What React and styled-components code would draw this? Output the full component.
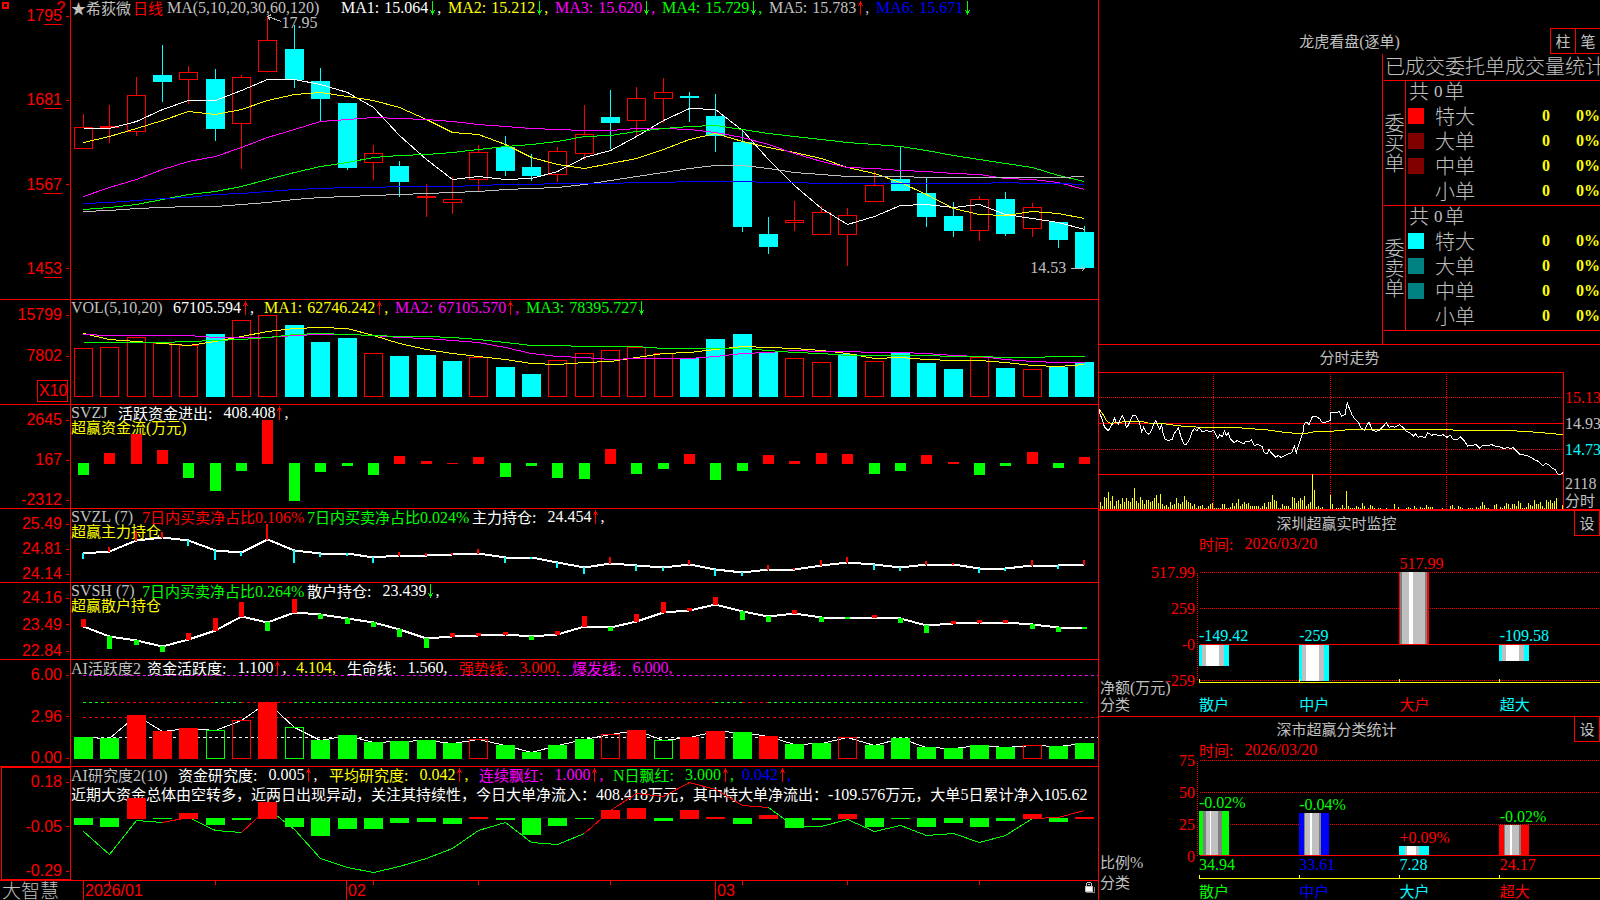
import React from "react";
import styled, { createGlobalStyle } from "styled-components";

const red = "#ff0000";
const cyan = "#00ffff";
const green = "#00ff00";
const yellow = "#ffff00";
const magenta = "#ff00ff";
const blue = "#0000ff";
const silver = "#c0c0c0";
const gray = "#808080";
const white = "#ffffff";

const barX = (i) => Math.round(12 + 26.35 * i);

/* ---------- data ---------- */

// [rising, high, body top, body bottom, low]
const candles = [
  [1, 114, 127, 148, 148], [1, 105, 126, 127, 143], [1, 77, 95, 131, 136],
  [0, 45, 75, 81, 102], [1, 66, 72, 79, 104], [0, 69, 79, 128, 141],
  [1, 75, 77, 123, 169], [1, 16, 40, 71, 71], [0, 25, 49, 79, 88],
  [0, 68, 81, 98, 121], [0, 103, 103, 167, 170], [1, 145, 153, 162, 180],
  [0, 161, 166, 181, 197], [1, 184, 196, 197, 217], [1, 177, 199, 202, 214],
  [1, 145, 152, 179, 191], [0, 136, 147, 170, 176], [0, 154, 167, 175, 181],
  [1, 147, 151, 174, 182], [1, 105, 134, 153, 160], [0, 90, 117, 122, 149],
  [1, 87, 98, 120, 136], [1, 78, 92, 98, 123], [0, 92, 96, 97, 122],
  [0, 94, 116, 135, 152], [0, 130, 142, 226, 232], [0, 217, 234, 246, 254],
  [1, 201, 220, 222, 231], [1, 206, 212, 234, 234], [1, 208, 215, 234, 266],
  [1, 171, 185, 201, 201], [0, 147, 179, 190, 190], [0, 178, 193, 216, 227],
  [0, 202, 216, 230, 237], [1, 196, 199, 230, 241], [0, 192, 199, 233, 236],
  [1, 203, 207, 228, 237], [0, 222, 222, 239, 248], [0, 226, 232, 267, 267],
];

const maLines = [
  [white, [128, 128, 121, 109, 100, 100, 90, 79, 79, 84, 92, 107, 135, 159, 179, 176, 179, 178, 171, 157, 150, 136, 120, 108, 109, 130, 159, 185, 208, 224, 216, 205, 204, 207, 204, 214, 218, 222, 229]],
  [yellow, [142, 136, 128, 120, 111, 114, 109, 100, 94, 92, 96, 100, 107, 119, 132, 134, 144, 157, 164, 168, 163, 158, 149, 139, 133, 141, 147, 152, 158, 167, 173, 182, 194, 208, 214, 215, 211, 213, 218]],
  [magenta, [196, 187, 179, 169, 161, 156, 147, 137, 129, 121, 119, 117, 118, 119, 121, 124, 126, 128, 129, 130, 130, 128, 128, 129, 132, 137, 144, 153, 161, 167, 168, 170, 171, 173, 174, 178, 179, 182, 189]],
  [green, [209, 207, 204, 199, 194, 191, 186, 179, 172, 166, 162, 157, 155, 154, 152, 149, 146, 144, 141, 136, 135, 131, 128, 126, 125, 129, 133, 136, 139, 142, 144, 146, 150, 155, 159, 163, 167, 175, 181]],
  [silver, [211, 210, 208, 207, 206, 206, 204, 202, 199, 197, 196, 195, 194, 193, 192, 191, 189, 188, 187, 184, 180, 176, 172, 168, 165, 165, 168, 172, 174, 176, 176, 176, 177, 177, 177, 177, 177, 177, 176]],
  [blue, [203, 202, 200, 198, 197, 194, 193, 191, 189, 188, 187, 187, 186, 186, 186, 185, 184, 184, 183, 183, 183, 182, 182, 181, 181, 181, 182, 182, 183, 183, 183, 183, 183, 183, 183, 182, 183, 183, 184]],
];

const volumeTops = [48, 47, 37, 43, 45, 34, 20, 15, 25, 42, 38, 53, 56, 55, 61, 57, 67, 74, 60, 53, 50, 47, 53, 58, 39, 34, 52, 58, 62, 54, 61, 53, 63, 69, 57, 68, 69, 67, 62];
const volumeFall = [5, 8, 9, 10, 12, 13, 14, 16, 17, 23, 24, 25, 26, 29, 31, 32, 33, 35, 37, 38];
const volumeLines = [
  [yellow, [33, 39, 41, 43, 45, 41, 36, 31, 28, 27, 28, 35, 43, 49, 53, 56, 59, 63, 64, 62, 61, 57, 53, 52, 49, 46, 47, 48, 50, 53, 58, 57, 59, 60, 60, 62, 65, 66, 64]],
  [magenta, [34, 35, 35, 35, 35, 37, 37, 37, 35, 34, 34, 35, 37, 38, 40, 42, 47, 53, 56, 57, 59, 58, 58, 58, 56, 53, 52, 50, 51, 51, 52, 52, 53, 55, 56, 59, 61, 62, 62]],
  [green, [42, 42, 42, 42, 41, 40, 39, 37, 34, 33, 34, 35, 36, 36, 37, 39, 42, 45, 45, 46, 46, 46, 48, 48, 48, 48, 50, 52, 53, 55, 55, 55, 55, 56, 56, 57, 57, 56, 56]],
];

const fundFlow = [-12, 11, 30, 14, -15, -28, -8, 44, -38, -9, -3, -12, 8, 3, 1, 7, -14, -3, -15, -16, 15, -11, -6, 10, -17, -8, 9, 3, 11, 10, -11, -8, 9, 2, -12, -3, 12, -5, 7];

const mainLine = [44, 42, 31, 28, 31, 41, 43, 30, 41, 44, 44, 48, 46, 46, 45, 44, 48, 48, 53, 58, 54, 56, 58, 55, 60, 63, 60, 60, 56, 53, 55, 58, 55, 55, 59, 59, 56, 56, 55];
const mainTicks = [-5, 4, 9, 5, -5, -9, -3, 15, -12, -3, -2, -5, 3, 2, 1, 4, -5, -1, -5, -6, 6, -5, -3, 4, -6, -3, 4, 1, 5, 5, -5, -3, 3, 1, -4, -2, 5, -3, 4];

const retailLine = [43, 53, 57, 63, 56, 47, 33, 39, 29, 31, 35, 39, 46, 55, 53, 52, 51, 53, 51, 43, 44, 38, 29, 27, 21, 28, 33, 30, 34, 34, 34, 35, 42, 40, 39, 39, 41, 44, 44];
const retailTicks = [7, -12, -4, -5, 6, 12, 14, -8, 13, -4, -5, -4, -7, -9, 3, 2, 2, -3, 3, 10, -3, 7, 10, 2, 7, -8, -5, 3, -4, -1, 2, -4, -7, 2, 2, 2, -4, -4, -1];

// g / r filled, G / R hollow
const activeKinds = "ggrrrGRrGggggggRggggRrGrrgrggRggggggRgg";
const activeTops = [77, 78, 55, 71, 68, 70, 60, 42, 67, 80, 75, 82, 81, 80, 83, 79, 85, 92, 85, 79, 74, 70, 80, 77, 71, 72, 76, 84, 83, 77, 85, 78, 87, 88, 85, 87, 85, 86, 83];
const activeBands = [[0, 1, green], [1, 5, red], [5, 6, green], [6, 8, red], [8, 20, green], [20, 24, red], [24, 25, green], [25, 26, red], [26, 38, green]];

const researchBars = [-7, -9, 21, -1, 6, -7, -2, 17, -9, -18, -11, -11, -5, -4, -6, 2, -2, -17, -8, -1, 9, 11, -3, 9, 2, -6, 4, -10, -2, 5, -9, -1, -9, -5, -9, -3, 5, -4, 2];
const researchLine = [64, 87, 53, 55, 50, 63, 65, 41, 62, 91, 100, 105, 99, 91, 81, 63, 55, 75, 77, 66, 43, 26, 29, 15, 22, 38, 40, 59, 59, 52, 64, 58, 68, 66, 75, 68, 51, 50, 43];
const researchRuns = [[0, 3, green], [3, 4, red], [4, 6, green], [6, 7, red], [7, 19, green], [19, 26, red], [26, 36, green], [36, 38, red]];

const pricePoints =
  "12,208 16,225 22,238 28,260 40,272 46,262 52,252 58,234 64,247 70,252 76,238 82,226 88,238 94,262 100,256 106,240 114,226 122,226 128,238 134,250 140,275 146,262 152,275 162,283 170,270 176,252 182,242 188,256 194,268 200,254 204,280 210,297 220,302 232,298 238,280 250,264 258,290 266,312 274,313 284,298 290,278 298,266 306,272 312,262 322,276 332,272 344,274 356,272 362,282 368,294 374,284 382,290 388,272 394,286 400,278 406,296 418,308 426,302 436,306 446,312 452,304 462,306 470,300 478,316 490,314 502,320 508,338 516,342 522,328 530,340 542,352 550,346 558,352 568,348 578,342 590,338 598,318 604,338 610,318 618,294 624,276 628,250 636,246 642,254 652,230 664,230 674,236 682,248 694,246 706,242 708,216 724,218 732,214 740,228 750,224 757,188 764,208 772,226 782,240 790,246 798,264 808,270 814,258 822,246 832,270 842,274 852,272 860,264 874,248 882,262 890,258 898,262 914,254 926,264 934,274 946,280 956,288 962,282 970,292 980,288 990,294 998,278 1010,286 1020,282 1034,288 1044,284 1056,292 1066,286 1074,298 1086,300 1096,290 1106,300 1118,318 1130,316 1144,314 1154,324 1164,316 1178,316 1190,314 1200,318 1212,320 1228,326 1238,322 1246,326 1254,322 1262,330 1276,344 1296,346 1308,352 1320,360 1330,364 1344,378 1352,370 1362,374 1370,384 1380,388 1388,402 1396,404 1404,398";
const averagePoints =
  "12,208 22,220 36,244 48,250 80,246 120,244 140,244 160,249 212,252 240,256 268,259 320,262 430,263 466,266 520,270 560,276 600,280 630,281 654,276 708,274 760,269 860,268 1066,268 1080,271 1230,271 1300,275 1350,279 1404,284";
const minuteVolumes = [
  20, 10, 36, 32, 51, 23, 39, 10, 23, 26, 15, 32, 20, 32, 23, 20, 32, 63, 25, 19,
  36, 26, 15, 28, 26, 20, 23, 32, 42, 17, 45, 15, 10, 12, 6, 20, 12, 16, 33, 17,
  16, 20, 39, 26, 20, 18, 8, 15, 4, 8, 8, 12, 3, 4, 10, 14, 18, 3, 4, 3,
  3, 16, 14, 4, 3, 6, 17, 10, 18, 30, 10, 14, 20, 14, 18, 10, 8, 8, 10, 10,
  4, 10, 18, 7, 22, 20, 42, 28, 24, 3, 3, 15, 8, 8, 8, 3, 36, 32, 18, 24,
  34, 26, 38, 8, 16, 22, 105, 57, 5, 10, 3, 6, 0, 0, 0, 42, 14, 0, 3, 3,
  3, 12, 4, 54, 10, 3, 3, 4, 10, 6, 4, 19, 10, 0, 4, 12, 8, 3, 0, 2,
  2, 0, 0, 2, 0, 0, 0, 15, 0, 5, 0, 0, 0, 3, 6, 3, 0, 8, 3, 0,
  6, 3, 3, 12, 6, 6, 6, 0, 0, 0, 0, 3, 0, 0, 0, 8, 12, 4, 0, 8,
  6, 2, 0, 0, 2, 4, 3, 0, 6, 4, 10, 20, 12, 3, 4, 0, 0, 12, 16, 0,
  6, 4, 8, 18, 14, 3, 14, 16, 10, 24, 18, 4, 3, 6, 18, 12, 10, 26, 14, 16,
  20, 10, 4, 26, 20, 27, 18, 24, 33, 0, 0, 12,
];

/* ---------- shared ---------- */

const GlobalStyle = createGlobalStyle`
  * {
    box-sizing: border-box;
  }
  body {
    margin: 0;
    background: #000;
    color: ${silver};
    font-family: "Liberation Serif", "Noto Sans CJK SC", serif;
    font-size: 16px;
    line-height: 16px;
  }
`;

const Zh = styled.span`
  font-family: "Noto Sans CJK SC", sans-serif;
  font-size: 15px;
  font-weight: 400;
`;

const Mixed = ({ children }) =>
  children
    .split(/([\u3000-\u9fff\uff00-\uffef]+)/)
    .filter(Boolean)
    .map((part, i) => (/[\u3000-\u9fff\uff00-\uffef]/.test(part) ? <Zh key={i}>{part}</Zh> : part));

const Svg = styled.svg`
  grid-area: 1 / 1;
  display: block;
  width: 100%;
  height: 100%;
  min-height: 0;
  shape-rendering: crispEdges;
  fill: none;
  polyline,
  path,
  line {
    vector-effect: non-scaling-stroke;
  }
`;

const ArrowIcon = styled.svg`
  flex: none;
  width: 5px;
  height: 14px;
  margin: 0 2px;
  shape-rendering: crispEdges;
  transform: ${(p) => (p.$up ? "none" : "rotate(180deg)")};
`;

const Arrow = ({ up }) => (
  <ArrowIcon $up={up} viewBox="0 0 5 14" fill={up ? red : green} aria-hidden="true">
    <path d="M2 0h1v14h-1zM1 2h3v2h-3zM0 4h1v1h-1zM4 4h1v1h-1z" />
  </ArrowIcon>
);

/* ---------- left side ---------- */

const Page = styled.main`
  display: grid;
  grid-template-columns: minmax(0, 1099fr) minmax(0, 501fr);
  grid-template-rows: minmax(0, 1fr);
  height: 100vh;
  min-height: 720px;
  overflow: hidden;
`;

const Charts = styled.section`
  display: grid;
  grid-template-rows:
    minmax(0, 300fr) minmax(0, 105fr) minmax(0, 104fr) minmax(0, 74fr)
    minmax(0, 77fr) minmax(0, 107fr) minmax(0, 114fr) minmax(0, 19fr);
  border-right: 1px solid ${red};
  min-width: 0;
`;

const Panel = styled.section`
  display: grid;
  grid-template-columns: 71px minmax(0, 1fr);
  grid-template-rows: minmax(0, 1fr);
  border-bottom: 1px solid ${red};
`;

const Axis = styled.div`
  position: relative;
  display: flex;
  flex-direction: column;
  justify-content: space-between;
  padding: ${(p) => p.$top || 7}px 0 ${(p) => p.$bottom || 0}px;
  border: 0 solid ${red};
  border-width: ${(p) => (p.$boxed ? "1px" : "0 1px 0 0")};
  margin-left: ${(p) => (p.$boxed ? 1 : 0)}px;
  color: ${red};
  font-family: "Liberation Sans", sans-serif;
`;

const Tick = styled.span`
  display: flex;
  align-items: center;
  justify-content: flex-end;
  gap: 4px;
  height: 16px;
  padding-right: 1px;
  white-space: nowrap;
  &::after {
    content: "";
    width: 3px;
    height: 1px;
    background: ${red};
  }
  u {
    height: 18px;
    padding-top: 1px;
    margin-left: -4px;
    text-decoration: none;
    border-bottom: 1px solid ${red};
  }
`;

const Multiplier = styled.span`
  align-self: flex-end;
  width: 31px;
  margin-right: 2px;
  padding: 2px 0 2px 1px;
  border: 1px solid ${red};
`;

const VolumeTop = styled.div`
  display: flex;
  flex-direction: column;
  gap: 25px;
`;

const Plot = styled.div`
  position: relative;
  display: grid;
  grid-template-columns: minmax(0, 1fr);
  grid-template-rows: minmax(0, 1fr);
  overflow: hidden;
`;

const Readouts = styled.header`
  grid-area: 1 / 1;
  line-height: 15px;
  white-space: nowrap;
`;

const Readout = styled.div`
  display: flex;
  height: 15px;
`;

const Item = styled.span`
  display: flex;
  flex: none;
  align-items: center;
  width: ${(p) => (p.$w ? `${p.$w}px` : "auto")};
  color: ${(p) => p.$color || silver};
`;

const Label = styled.span`
  margin-right: ${(p) => (p.$wide ? 11 : 5)}px;
`;

const Note = styled.p`
  margin: 0;
  color: ${(p) => p.$color};
  line-height: ${(p) => p.$line || 14}px;
`;

const PeriodLink = styled.a`
  margin-left: 2px;
  color: ${red};
  text-decoration: none;
`;

const Field = ({ w, color, label, value, up, down, comma = true }) => (
  <Item $w={w} $color={color}>
    {label && (
      <Label $wide={/[\u4e00-\u9fff]/.test(label)}>
        <Mixed>{label + ":"}</Mixed>
      </Label>
    )}
    <span>
      <Mixed>{value}</Mixed>
    </span>
    {(up || down) && <Arrow up={up} />}
    {comma && ","}
  </Item>
);

const Series = ({ values, color, width = 1, from = 0, to = values.length - 1 }) => (
  <polyline
    transform="translate(.5 .5)"
    stroke={color}
    strokeWidth={width}
    points={values
      .map((y, i) => `${barX(i)},${y}`)
      .slice(from, to + 1)
      .join(" ")}
  />
);

const Bar = ({ i, top, bottom, color, hollow, w = 19 }) =>
  hollow ? (
    <rect x={barX(i) - (w - 1) / 2 + 0.5} y={top + 0.5} width={w - 1} height={bottom - top - 1} stroke={color} />
  ) : (
    <rect x={barX(i) - (w - 1) / 2} y={top} width={w} height={bottom - top} fill={color} />
  );

const CornerMark = styled.svg`
  position: absolute;
  left: 2px;
  top: 2px;
  width: 8px;
  height: 8px;
  shape-rendering: crispEdges;
`;

const Help = styled.button`
  position: absolute;
  right: 4px;
  top: 0;
  padding: 0;
  border: 0;
  background: none;
  color: #c80000;
  font: bold 16px/16px "Liberation Sans", sans-serif;
`;

const PriceTag = styled.span`
  position: absolute;
  left: ${(p) => p.$x}%;
  top: ${(p) => p.$y}%;
`;

const Kline = () => (
  <Panel>
    <Axis $top={8} $bottom={22}>
      <CornerMark viewBox="0 0 8 8" fill="none" stroke={red} strokeWidth="2" aria-hidden="true">
        <path d="M1 1h5v5h-5z" />
      </CornerMark>
      {["17 95", "16 81", "15 67", "14 53"].map((t) => (
        <Tick key={t}>
          {t.split(" ")[0]}
          <u>{t.split(" ")[1]}</u>
        </Tick>
      ))}
      <Help aria-label="帮助">?</Help>
    </Axis>
    <Plot>
      <Readouts>
        <Readout>
          <Item $w={96}>
            <Zh>★希荻微</Zh>
            <PeriodLink href="#day">
              <Zh>日线</Zh>
            </PeriodLink>
          </Item>
          <Item $w={174}>MA(5,10,20,30,60,120)</Item>
          <Field w={107} color={white} label="MA1" value="15.064" down />
          <Field w={107} color={yellow} label="MA2" value="15.212" down />
          <Field w={107} color={magenta} label="MA3" value="15.620" down />
          <Field w={107} color={green} label="MA4" value="15.729" down />
          <Field w={107} color={silver} label="MA5" value="15.783" up />
          <Field color={blue} label="MA6" value="15.671" down comma={false} />
        </Readout>
      </Readouts>
      <Svg viewBox="0 0 1027 299" preserveAspectRatio="none">
        {candles.map(([up, high, top, bottom, low], i) => (
          <g key={i}>
            <rect x={barX(i)} y={high} width="1" height={top - high} fill={up ? red : cyan} />
            <rect x={barX(i)} y={bottom} width="1" height={low - bottom} fill={up ? red : cyan} />
            <Bar i={i} top={top} bottom={bottom + 1} color={up ? red : cyan} hollow={up && bottom - top > 1} />
          </g>
        ))}
        {maLines.map(([color, values]) => (
          <Series key={color} color={color} values={values} />
        ))}
        <g stroke={silver} transform="translate(.5 .5)">
          <path d="M210 21L196 16M200 14L196 16L199 20" />
          <path d="M999 268H1013M1010 265L1013 268L1010 271" />
        </g>
      </Svg>
      <PriceTag $x={20.5} $y={5}>17.95</PriceTag>
      <PriceTag $x={93.4} $y={87}>14.53</PriceTag>
    </Plot>
  </Panel>
);

const Volume = () => (
  <Panel>
    <Axis $bottom={2}>
      <VolumeTop>
        <Tick>15799</Tick>
        <Tick>7802</Tick>
      </VolumeTop>
      <Multiplier>X10</Multiplier>
    </Axis>
    <Plot>
      <Readouts>
        <Readout>
          <Item $w={102}>VOL(5,10,20)</Item>
          <Field w={91} color={white} value="67105.594" up />
          <Field w={131} color={yellow} label="MA1" value="62746.242" up />
          <Field w={131} color={magenta} label="MA2" value="67105.570" up />
          <Field color={green} label="MA3" value="78395.727" down comma={false} />
        </Readout>
      </Readouts>
      <Svg viewBox="0 0 1027 104" preserveAspectRatio="none">
        {volumeTops.map((top, i) => {
          const fall = volumeFall.includes(i);
          return <Bar key={i} i={i} top={top} bottom={97} color={fall ? cyan : red} hollow={!fall} />;
        })}
        {volumeLines.map(([color, values]) => (
          <Series key={color} color={color} values={values} />
        ))}
      </Svg>
    </Plot>
  </Panel>
);

const FundFlow = () => (
  <Panel>
    <Axis>
      <Tick>2645</Tick>
      <Tick>167</Tick>
      <Tick>-2312</Tick>
    </Axis>
    <Plot>
      <Readouts>
        <Readout>
          <Item $w={47}>SVZJ</Item>
          <Field color={white} label="活跃资金进出" value="408.408" up />
        </Readout>
        <Note $color={yellow}>
          <Mixed>超赢资金流(万元)</Mixed>
        </Note>
      </Readouts>
      <Svg viewBox="0 0 1027 103" preserveAspectRatio="none">
        {fundFlow.map((h, i) => (
          <Bar key={i} i={i} w={11} top={h > 0 ? 59 - h : 58} bottom={h > 0 ? 59 : 58 - h} color={h > 0 ? red : green} />
        ))}
      </Svg>
    </Plot>
  </Panel>
);

const Holding = ({ ticks, name, fields, note, height, line, offsets, down, tickWidth }) => (
  <Panel>
    <Axis>
      {ticks.map((t) => (
        <Tick key={t}>{t}</Tick>
      ))}
    </Axis>
    <Plot>
      <Readouts>
        <Readout>
          <Item $w={71}>{name}</Item>
          {fields}
        </Readout>
        <Note $color={yellow}>
          <Mixed>{note}</Mixed>
        </Note>
      </Readouts>
      <Svg viewBox={`0 0 1027 ${height}`} preserveAspectRatio="none">
        <Series values={line} color={white} width={2} />
        {offsets.map((h, i) => (
          <rect
            key={i}
            x={barX(i) - Math.floor(tickWidth / 2)}
            y={h > 0 ? line[i] - h : line[i]}
            width={tickWidth}
            height={Math.abs(h) + 1}
            fill={h > 0 ? red : down}
          />
        ))}
      </Svg>
    </Plot>
  </Panel>
);

const Activity = () => (
  <Panel>
    <Axis>
      <Tick>6.00</Tick>
      <Tick>2.96</Tick>
      <Tick>0.00</Tick>
    </Axis>
    <Plot>
      <Readouts>
        <Readout>
          <Item $w={76}>
            <span>
              <Mixed>AI活跃度2</Mixed>
            </span>
          </Item>
          <Field w={149} color={white} label="资金活跃度" value="1.100" up />
          <Field w={51} color={yellow} value="4.104" />
          <Field w={112} color={white} label="生命线" value="1.560" />
          <Field w={113} color={red} label="强势线" value="3.000" />
          <Field color={magenta} label="爆发线" value="6.000" />
        </Readout>
      </Readouts>
      <Svg viewBox="0 0 1027 106" preserveAspectRatio="none">
        <g strokeDasharray="3 3" transform="translate(0 .5)">
          <line x1="12" x2="1027" y1="15" y2="15" stroke={magenta} />
          <line x1="12" x2="1027" y1="57" y2="57" stroke={red} />
          <line x1="12" x2="1027" y1="77" y2="77" stroke={white} />
          {activeBands.map(([from, to, color]) => (
            <line key={from} x1={barX(from)} x2={barX(to)} y1="42" y2="42" stroke={color} />
          ))}
        </g>
        <Series values={activeTops} color={white} />
        {activeTops.map((top, i) => {
          const kind = activeKinds[i];
          return (
            <Bar
              key={i}
              i={i}
              top={top}
              bottom={99}
              color={kind.toLowerCase() === "g" ? green : red}
              hollow={kind === kind.toUpperCase()}
            />
          );
        })}
      </Svg>
    </Plot>
  </Panel>
);

const Research = () => (
  <Panel>
    <Axis $boxed $top={6}>
      <Tick>0.18</Tick>
      <Tick>-0.05</Tick>
      <Tick>-0.29</Tick>
    </Axis>
    <Plot>
      <Readouts>
        <Readout>
          <Item $w={107}>
            <span>
              <Mixed>AI研究度2(10)</Mixed>
            </span>
          </Item>
          <Field w={151} color={white} label="资金研究度" value="0.005" up />
          <Field w={150} color={yellow} label="平均研究度" value="0.042" up />
          <Field w={134} color={magenta} label="连续飘红" value="1.000" up />
          <Field w={129} color={green} label="N日飘红" value="3.000" up />
          <Field color={blue} value="0.042" up />
        </Readout>
        <Note $color={white} $line={23}>
          <Mixed>
            近期大资金总体由空转多，近两日出现异动，关注其持续性，今日大单净流入：408.418万元，其中特大单净流出：-109.576万元，大单5日累计净入105.62
          </Mixed>
        </Note>
      </Readouts>
      <Svg viewBox="0 0 1027 113" preserveAspectRatio="none">
        {researchRuns.map(([from, to, color]) => (
          <Series key={from} values={researchLine} color={color} from={from} to={to} />
        ))}
        {researchBars.map((h, i) => (
          <Bar key={i} i={i} top={h > 0 ? 52 - h : 51} bottom={h > 0 ? 52 : 51 - h} color={h > 0 ? red : green} />
        ))}
      </Svg>
    </Plot>
  </Panel>
);

const Footer = styled.footer`
  display: grid;
  grid-template-columns: 71px minmax(0, 1fr);
`;

const Brand = styled.span`
  padding-left: 2px;
  font-family: "Noto Sans CJK SC", sans-serif;
  font-size: 19px;
  font-weight: 300;
  line-height: 18px;
`;

const Timeline = styled.div`
  position: relative;
  display: grid;
  grid-template-columns: minmax(0, 12fr) minmax(0, 263fr) minmax(0, 369fr) minmax(0, 383fr);
`;

const Month = styled.span`
  padding-left: 1px;
  border-left: 1px solid ${red};
  color: ${red};
  font-family: "Liberation Sans", sans-serif;
  line-height: 19px;
`;

const WeekTicks = styled.svg`
  position: absolute;
  inset: 0 0 auto;
  width: 100%;
  height: 4px;
  shape-rendering: crispEdges;
`;

const Lock = styled.svg`
  position: absolute;
  right: 3px;
  top: 1px;
  width: 10px;
  height: 12px;
  shape-rendering: crispEdges;
`;

const TimeAxis = () => (
  <Footer>
    <Brand>大智慧</Brand>
    <Timeline>
      <span />
      <Month>2026/01</Month>
      <Month>02</Month>
      <Month>03</Month>
      <WeekTicks viewBox="0 0 1027 4" preserveAspectRatio="none" fill={red}>
        {[1, 5, 11, 15, 20, 25, 29, 34].map((i) => (
          <rect key={i} x={barX(i)} y="0" width="1" height="4" />
        ))}
      </WeekTicks>
      <Lock viewBox="0 0 10 12" aria-hidden="true">
        <path d="M2 0h4v1h-4zM1 1h1v3h-1zM6 1h1v3h-1zM3 2h2v1h-2z" fill={silver} />
        <path d="M0 4h8v6h-8z" fill={silver} />
        <path d="M1 5h6v4h-6z" fill={white} />
        <path d="M9 5h1v6h-9v-1h8z" fill={gray} />
      </Lock>
    </Timeline>
  </Footer>
);

/* ---------- right side ---------- */

const Side = styled.aside`
  display: grid;
  grid-template-rows: minmax(0, 345fr) minmax(0, 166fr) minmax(0, 206fr) minmax(0, 183fr);
  min-width: 0;
`;

const Orders = styled.section`
  display: flex;
  flex-direction: column;
  padding-top: 28px;
  border-bottom: 1px solid ${red};
  overflow: hidden;
`;

const OrdersHead = styled.header`
  display: grid;
  grid-template-columns: 1fr auto 1fr;
  align-items: center;
  height: 26px;
`;

const Title = styled.h2`
  margin: 0;
  font-size: 16px;
  font-weight: 400;
  line-height: 24px;
  text-align: center;
`;

const Buttons = styled.div`
  grid-column: 3;
  display: flex;
  justify-self: end;
`;

const ToolButton = styled.button`
  width: 25px;
  height: 26px;
  padding: 0;
  border: 1px solid ${red};
  border-right-width: ${(p) => (p.$closed ? 1 : 0)}px;
  border-top-width: ${(p) => (p.$closed ? 0 : 1)}px;
  background: #000;
  color: ${silver};
  font: 400 15px/22px "Noto Sans CJK SC", sans-serif;
`;

const OrderBox = styled.div`
  flex: 1;
  align-self: flex-end;
  width: 218px;
  padding-left: 1px;
  border-left: 1px solid ${red};
  font: 300 20px/24px "Noto Sans CJK SC", sans-serif;
  white-space: nowrap;
`;

const OrderTitle = styled.h3`
  height: 26px;
  margin: 0;
  padding-left: 1px;
  font-size: 20px;
  font-weight: 300;
  line-height: 23px;
`;

const OrderTable = styled.table`
  width: 100%;
  table-layout: fixed;
  border-spacing: 0;
  border-bottom: 1px solid ${red};
  line-height: 20px;

  tbody tr:first-child > * {
    border-top: 1px solid ${red};
  }
  th,
  td {
    height: 25px;
    padding: 0 0 4px;
    font-weight: 300;
    text-align: left;
    vertical-align: middle;
  }
  tbody th[rowspan] {
    padding: 0;
    border-right: 1px solid ${red};
    text-align: center;
    white-space: normal;
  }
`;

const SideWord = styled.span`
  display: block;
  width: 20px;
  margin: 0 auto;
  word-break: break-all;
`;

const Swatch = styled.i`
  display: block;
  width: 16px;
  height: 16px;
  margin-left: 2px;
  background: ${(p) => p.$color};
`;

const Num = styled.td`
  && {
    color: ${yellow};
    font-family: "Liberation Serif", serif;
    font-size: 16px;
    font-weight: 700;
    text-align: right;
  }
`;

const Total = styled.span`
  display: flex;
  height: 20px;
  padding-left: 3px;
  b {
    margin: 0 2px 0 5px;
    font: 17px/22px "Liberation Serif", serif;
  }
`;

const sides = [
  ["委买单", [["特大", red], ["大单", "#800000"], ["中单", "#800000"], ["小单", "transparent"]]],
  ["委卖单", [["特大", cyan], ["大单", "#008080"], ["中单", "#008080"], ["小单", "transparent"]]],
];

const OrderStats = () => (
  <Orders>
    <OrdersHead>
      <span />
      <Title>
        <Mixed>龙虎看盘(逐单)</Mixed>
      </Title>
      <Buttons>
        <ToolButton>柱</ToolButton>
        <ToolButton>笔</ToolButton>
      </Buttons>
    </OrdersHead>
    <OrderBox>
      <OrderTitle id="order-title">已成交委托单成交量统计</OrderTitle>
      <OrderTable aria-labelledby="order-title">
        <colgroup>
          <col width="22" />
          <col width="29" />
          <col width="70" />
          <col width="45" />
          <col width="50" />
        </colgroup>
        {sides.map(([side, rows]) => (
          <tbody key={side}>
            <tr>
              <th rowSpan={5} scope="rowgroup">
                <SideWord>{side}</SideWord>
              </th>
              <td colSpan={4}>
                <Total>
                  共<b>0</b>单
                </Total>
              </td>
            </tr>
            {rows.map(([name, color]) => (
              <tr key={name}>
                <td>
                  <Swatch $color={color} />
                </td>
                <th scope="row">{name}</th>
                <Num>0</Num>
                <Num>0%</Num>
              </tr>
            ))}
          </tbody>
        ))}
      </OrderTable>
    </OrderBox>
  </Orders>
);

const Intraday = styled.section`
  display: grid;
  grid-template-columns: minmax(0, 465fr) minmax(0, 36fr);
  grid-template-rows: 27px minmax(0, 1fr);
  border-bottom: 2px solid ${red};
  ${Title} {
    grid-column: 1 / 3;
  }
  ${Svg} {
    grid-area: 2 / 1;
  }
`;

const PriceScale = styled.div`
  grid-area: 2 / 2;
  display: flex;
  flex-direction: column;
  gap: 10px;
  padding: 18px 0 0 1px;
  overflow: hidden;
  white-space: nowrap;
`;

const Tone = styled.span`
  color: ${(p) => p.$color};
`;

const Bottom = styled.span`
  margin-top: 8px;
  line-height: 16px;
`;

const IntradayChart = () => (
  <Intraday>
    <Title>
      <Zh>分时走势</Zh>
    </Title>
    <Svg viewBox="12 96 1395 411" preserveAspectRatio="none">
      <g stroke={red}>
        <path d="M12 97.5H1405.5V507M12 250.5H1405M12 403.5H1405" />
        <path strokeDasharray="1 1" d="M12 172.5H1405M12 328.5H1405M355.5 97V507M706.5 97V507M1054.5 97V507" />
      </g>
      {minuteVolumes.map((h, i) => (
        <rect key={i} x={15 + i * 6} y={507 - h} width="3" height={h} fill={yellow} />
      ))}
      <polyline points={averagePoints} stroke={yellow} />
      <polyline points={pricePoints} stroke={white} />
    </Svg>
    <PriceScale>
      <Tone $color={red}>15.13</Tone>
      <Tone $color={silver}>14.93</Tone>
      <Tone $color={cyan}>14.73</Tone>
      <Bottom>
        2118
        <br />
        <Zh>分时</Zh>
      </Bottom>
    </PriceScale>
  </Intraday>
);

const BarPanel = styled.section`
  display: grid;
  grid-template-columns: 100px minmax(0, 1fr);
  grid-template-rows: 25px 16px minmax(0, 1fr) 16px;
  padding-bottom: ${(p) => (p.$last ? 0 : 3)}px;
  border-bottom: ${(p) => (p.$last ? 0 : 1)}px solid ${red};
`;

const BarHead = styled.header`
  grid-column: 1 / 3;
  display: grid;
  grid-template-columns: minmax(0, 1fr) 26px;
  ${ToolButton} {
    width: 26px;
    height: 25px;
  }
`;

const DateLine = styled.time`
  grid-area: 2 / 2;
  display: flex;
  color: ${red};
`;

const Scale = styled.div`
  grid-area: 2 / 1 / 5 / 2;
  display: flex;
  flex-direction: column;
  gap: ${(p) => p.$gap}px;
  padding: ${(p) => p.$top}px 4px 0 0;
  color: ${red};
  text-align: right;
`;

const Corner = styled.div`
  grid-area: 2 / 1 / 5 / 2;
  align-self: end;
  padding: 0 0 ${(p) => p.$bottom}px 1px;
  line-height: ${(p) => p.$line}px;
`;

const BarPlot = styled.div`
  grid-area: 3 / 2;
  position: relative;
  display: grid;
  grid-template-rows: minmax(0, 1fr);
`;

const BarLabel = styled.span`
  position: absolute;
  line-height: 16px;
  white-space: nowrap;
`;

const Categories = styled.div`
  grid-area: 4 / 2;
  display: grid;
  grid-template-columns: repeat(4, minmax(0, 1fr));
  line-height: 14px;
`;

const Tube = ({ x, top, bottom, stripes }) => {
  let left = x;
  return stripes.map(([w, color], i) => {
    const rect = <rect key={i} x={left} y={top} width={w} height={bottom - top} fill={color} />;
    left += w;
    return rect;
  });
};

const CategoryChart = ({ title, scale, scaleTop, scaleGap, corner, cornerLine, cornerBottom, height, grid, zero, base, bars, last }) => (
  <BarPanel $last={last}>
    <BarHead>
      <Title>
        <Zh>{title}</Zh>
      </Title>
      <ToolButton $closed>设</ToolButton>
    </BarHead>
    <DateLine dateTime="2026-03-20">
      <Label $wide>
        <Mixed>时间:</Mixed>
      </Label>
      2026/03/20
    </DateLine>
    <Scale $top={scaleTop} $gap={scaleGap}>
      {scale.map((s) => (
        <span key={s}>{s}</span>
      ))}
    </Scale>
    <Corner $line={cornerLine} $bottom={cornerBottom}>
      <Mixed>{corner}</Mixed>
      <br />
      <Zh>分类</Zh>
    </Corner>
    <BarPlot>
      <Svg viewBox={`0 0 401 ${height}`} preserveAspectRatio="none" overflow="visible">
        <g transform="translate(.5 .5)" stroke={red} strokeDasharray="1 1">
          {grid.map((y) => (
            <line key={y} x1="0" x2="401" y1={y} y2={y} />
          ))}
          <line x1="-2" x2="-2" y1={grid[0]} y2={zero + (last ? 0 : 36)} />
        </g>
        {bars.map((b, i) => (
          <Tube key={i} x={i * 100} top={b.top} bottom={b.bottom} stripes={b.stripes} />
        ))}
        <g transform="translate(.5 .5)">
          <line x1="0" x2="401" y1={zero} y2={zero} stroke={red} />
          <path
            stroke={yellow}
            d={`M0 ${base - 4}V${base}H400M100 ${base - 4}V${base}M200 ${base - 4}V${base}M300 ${base - 4}V${base}`}
          />
        </g>
      </Svg>
      {bars.map((b, i) =>
        b.labels.map(([y, text, color]) => (
          <BarLabel key={i + text} style={{ left: `${i * 25}%`, top: `${(y / height) * 100}%`, color }}>
            {text}
          </BarLabel>
        ))
      )}
    </BarPlot>
    <Categories>
      {bars.map((b) => (
        <Tone key={b.name} $color={b.color}>
          <Zh>{b.name}</Zh>
        </Tone>
      ))}
    </Categories>
  </BarPanel>
);

const cyanTube = [[3, cyan], [4, silver], [13, white], [5, silver], [5, cyan]];
const slimTube = (c) => [[5, c], [1, gray], [5, silver], [2, white], [7, silver], [2, gray], [8, c]];

const netBars = [
  { name: "散户", color: cyan, top: 93, bottom: 114, stripes: cyanTube, labels: [[76, "-149.42", cyan]] },
  { name: "中户", color: cyan, top: 93, bottom: 129, stripes: cyanTube, labels: [[76, "-259", cyan]] },
  {
    name: "大户",
    color: red,
    top: 20,
    bottom: 92,
    stripes: [[1, red], [2, gray], [7, silver], [4, white], [12, silver], [2, gray], [2, red]],
    labels: [[4, "517.99", red]],
  },
  { name: "超大", color: cyan, top: 93, bottom: 109, stripes: cyanTube, labels: [[76, "-109.58", cyan]] },
];

const shareBars = [
  {
    name: "散户",
    color: green,
    top: 53,
    bottom: 97,
    stripes: [[4, green], [3, gray], [4, silver], [1, white], [7, silver], [4, gray], [7, green]],
    labels: [[37, "-0.02%", green], [99, "34.94", green]],
  },
  { name: "中户", color: blue, top: 55, bottom: 97, stripes: slimTube(blue), labels: [[39, "-0.04%", green], [99, "33.61", blue]] },
  {
    name: "大户",
    color: cyan,
    top: 88,
    bottom: 97,
    stripes: [[6, cyan], [2, silver], [9, white], [3, silver], [10, cyan]],
    labels: [[72, "+0.09%", red], [99, "7.28", cyan]],
  },
  { name: "超大", color: red, top: 67, bottom: 97, stripes: slimTube(red), labels: [[51, "-0.02%", green], [99, "24.17", red]] },
];

const App = () => (
  <>
    <GlobalStyle />
    <Page>
      <Charts>
        <Kline />
        <Volume />
        <FundFlow />
        <Holding
          ticks={["25.49", "24.81", "24.14"]}
          name="SVZL (7)"
          note="超赢主力持仓"
          height={73}
          line={mainLine}
          offsets={mainTicks}
          down={cyan}
          tickWidth={2}
          fields={
            <>
              <Field w={165} color={red} value="7日内买卖净占比0.106%" comma={false} />
              <Field w={165} color={green} value="7日内买卖净占比0.024%" comma={false} />
              <Field color={white} label="主力持仓" value="24.454" up />
            </>
          }
        />
        <Holding
          ticks={["24.16", "23.49", "22.84"]}
          name="SVSH (7)"
          note="超赢散户持仓"
          height={76}
          line={retailLine}
          offsets={retailTicks}
          down={green}
          tickWidth={5}
          fields={
            <>
              <Field w={165} color={green} value="7日内买卖净占比0.264%" comma={false} />
              <Field color={white} label="散户持仓" value="23.439" down />
            </>
          }
        />
        <Activity />
        <Research />
        <TimeAxis />
      </Charts>
      <Side>
        <OrderStats />
        <IntradayChart />
        <CategoryChart
          title="深圳超赢实时监控"
          scale={["517.99", "259", "-0", "-259"]}
          scaleTop={29}
          scaleGap={20}
          corner="净额(万元)"
          cornerLine={16}
          cornerBottom={0}
          height={145}
          grid={[20, 56, 128]}
          zero={92}
          base={130}
          bars={netBars}
        />
        <CategoryChart
          last
          title="深市超赢分类统计"
          scale={["75", "50", "25", "0"]}
          scaleTop={11}
          scaleGap={16}
          corner="比例%"
          cornerLine={19}
          cornerBottom={8}
          height={126}
          grid={[2, 34, 66]}
          zero={97}
          base={120}
          bars={shareBars}
        />
      </Side>
    </Page>
  </>
);

export default App;
